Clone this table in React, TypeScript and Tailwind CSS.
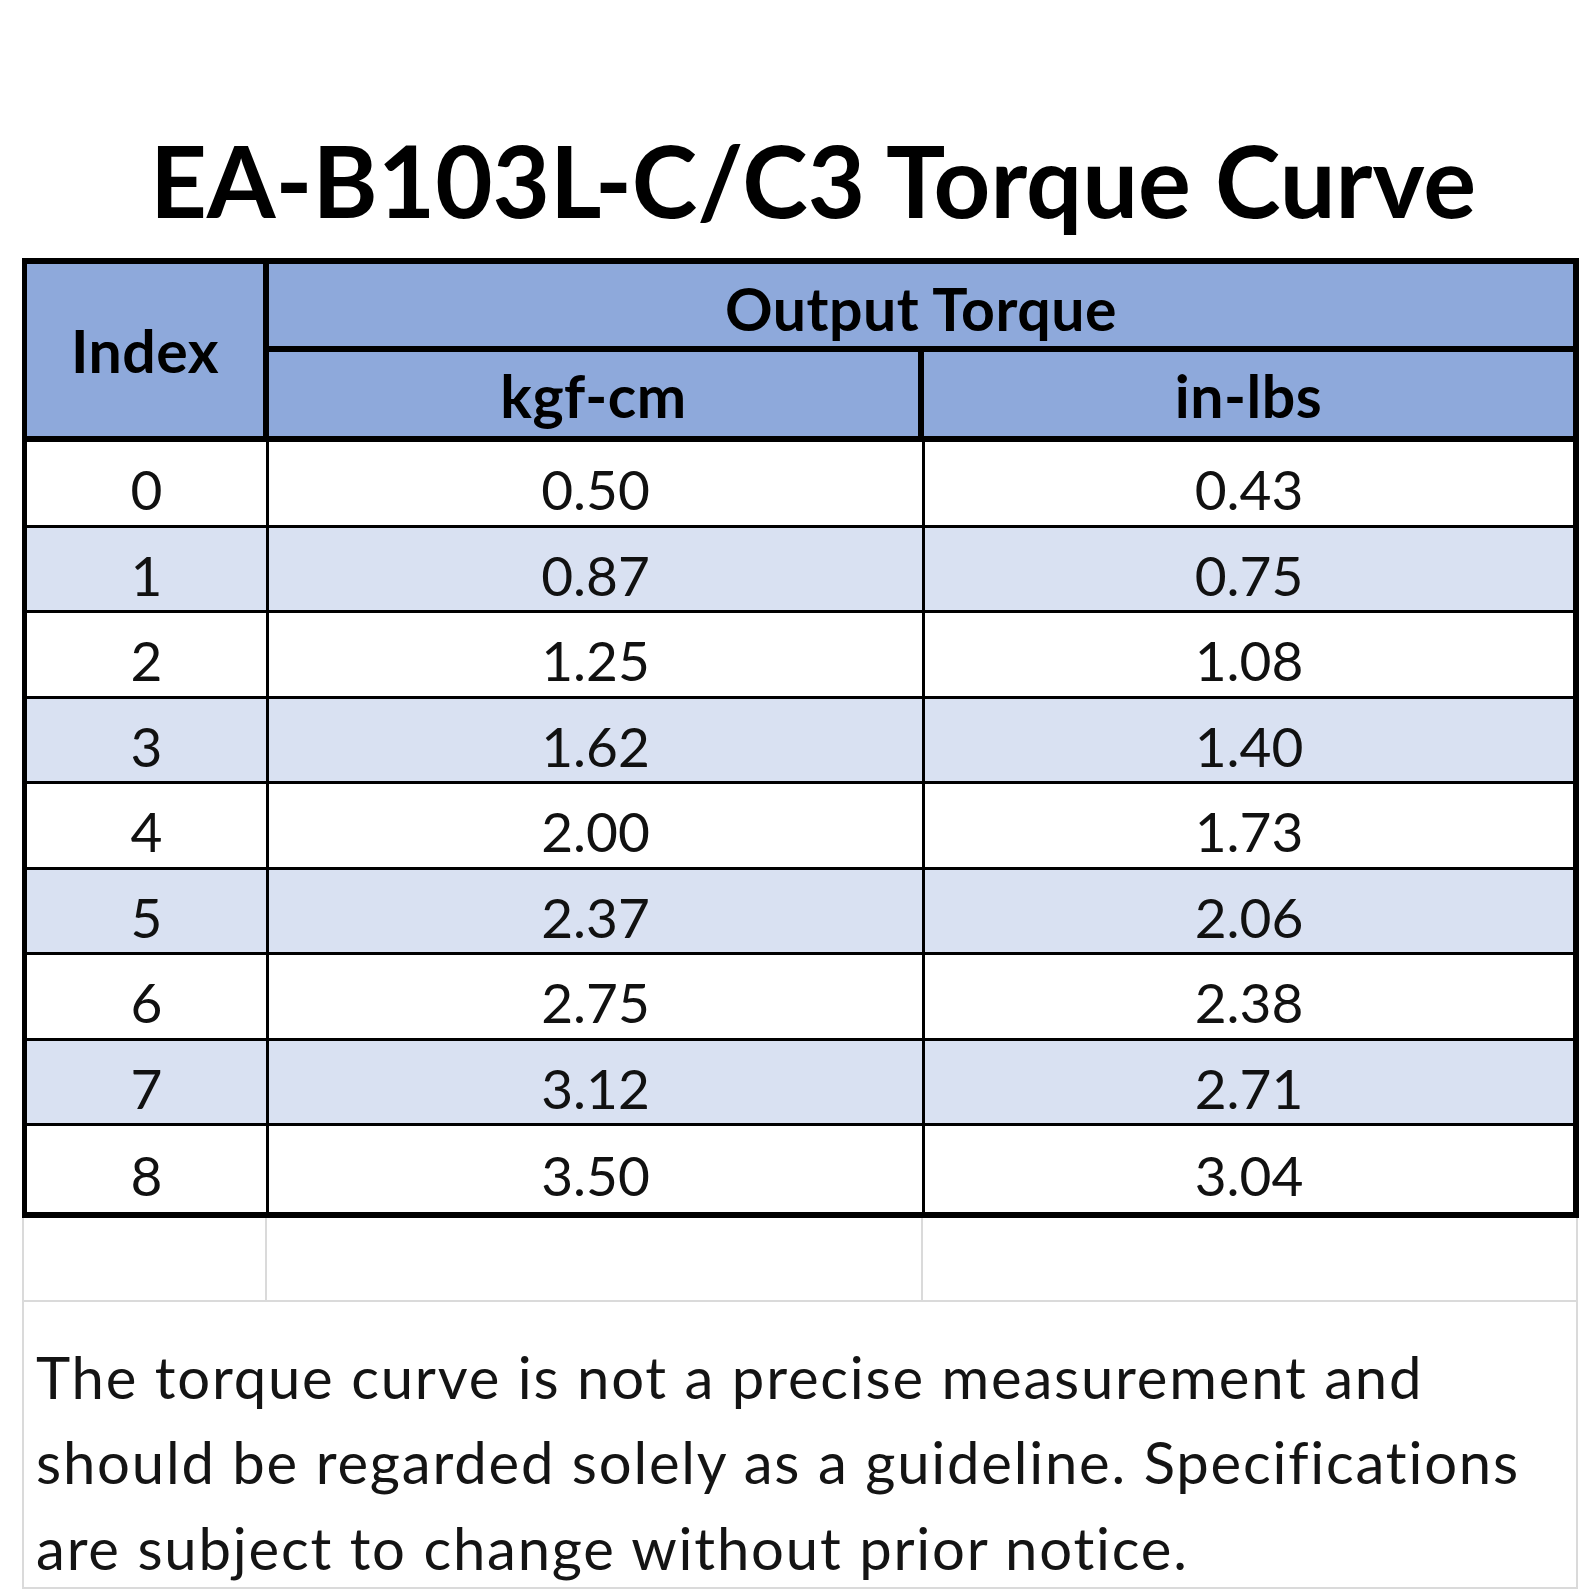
const rows = [
  ['0', '0.50', '0.43'],
  ['1', '0.87', '0.75'],
  ['2', '1.25', '1.08'],
  ['3', '1.62', '1.40'],
  ['4', '2.00', '1.73'],
  ['5', '2.37', '2.06'],
  ['6', '2.75', '2.38'],
  ['7', '3.12', '2.71'],
  ['8', '3.50', '3.04'],
]

const font = { fontFamily: 'Lato, "Open Sans", sans-serif' }

export default function App() {
  return (
    <div className="w-[1590px] h-[1590px] bg-white overflow-hidden text-black" style={font}>
      {/* title */}
      <div className="h-[258px] pt-[130px] pl-[36px] text-center">
        <h1 className="text-[99px] leading-[100px] font-bold">EA-B103L-C/C3 Torque Curve</h1>
      </div>

      {/* torque table */}
      <div className="ml-[22px] w-[1557px] border-t-[6px] border-b-[6px] border-l-[5px] border-r-[6px] border-black">
        <div className="flex border-b-[6px] border-black bg-[#8ea9db] text-[59px] font-bold tracking-[0.5px]">
          <div className="w-[242px] h-[172px] border-r-[6px] border-black flex items-center justify-center pt-[2px]">
            Index
          </div>
          <div className="flex-1 flex flex-col">
            <div className="h-[88px] border-b-[6px] border-black flex items-center justify-center pt-[8px]">
              Output Torque
            </div>
            <div className="flex h-[84px]">
              <div className="w-[655px] border-r-[6px] border-black flex items-center justify-center pt-[4px]">
                kgf-cm
              </div>
              <div className="flex-1 flex items-center justify-center pt-[4px]">in-lbs</div>
            </div>
          </div>
        </div>
        {rows.map((r, i) => (
          <div
            key={r[0]}
            className={`flex h-[85.5px] text-[55px] text-[#111] ${i % 2 === 1 ? 'bg-[#d9e1f2]' : 'bg-white'} ${
              i < rows.length - 1 ? 'border-b-[3px] border-black' : ''
            }`}
          >
            <div className="w-[242px] border-r-[3px] border-black flex items-center justify-center pt-[12px]">{r[0]}</div>
            <div className="w-[656px] border-r-[3px] border-black flex items-center justify-center pt-[12px]">{r[1]}</div>
            <div className="flex-1 flex items-center justify-center pt-[12px]">{r[2]}</div>
          </div>
        ))}
      </div>

      {/* empty sheet row + note */}
      <div className="ml-[22px] w-[1556px] border-l-2 border-r-2 border-[#dadada]">
        <div className="flex h-[84px] border-b-2 border-[#dadada]">
          <div className="w-[243px] border-r-2 border-[#dadada]" />
          <div className="w-[656px] border-r-2 border-[#dadada]" />
          <div className="flex-1" />
        </div>
        <div className="h-[287px] border-b-2 border-[#dadada] pt-[32px] pl-[12px] text-[58px] leading-[85.5px] tracking-[1.8px] whitespace-nowrap text-[#141414]">
          The torque curve is not a precise measurement and
          <br />
          should be regarded solely as a guideline. Specifications
          <br />
          are subject to change without prior notice.
        </div>
      </div>
    </div>
  )
}
